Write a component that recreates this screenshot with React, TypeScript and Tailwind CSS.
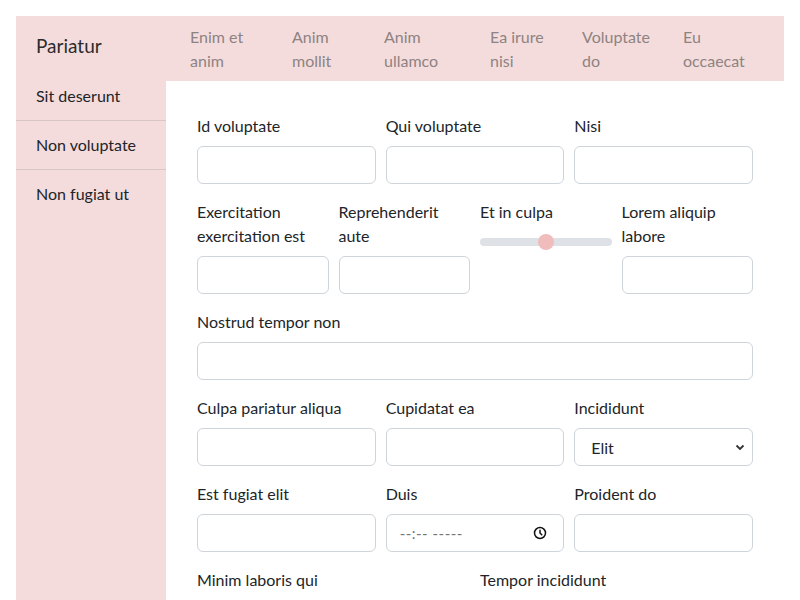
import React from "react";

const font = { fontFamily: "Lato, 'Liberation Sans', sans-serif" };

function Label({ children }: { children: React.ReactNode }) {
  return <div className="text-[16px] leading-6 text-[#212529] mb-2">{children}</div>;
}

function Input() {
  return <div className="h-[38px] rounded-[6px] border border-[#ced4da] bg-white" />;
}

function Field({ label }: { label: React.ReactNode }) {
  return (
    <div className="flex flex-col">
      <Label>{label}</Label>
      <Input />
    </div>
  );
}

export default function App() {
  const nav = [
    { a: "Enim et", b: "anim", w: "w-[102px]" },
    { a: "Anim", b: "mollit", w: "w-[92px]" },
    { a: "Anim", b: "ullamco", w: "w-[106px]" },
    { a: "Ea irure", b: "nisi", w: "w-[92px]" },
    { a: "Voluptate", b: "do", w: "w-[101px]" },
    { a: "Eu", b: "occaecat", w: "w-[80px]" },
  ];
  return (
    <div className="h-[600px] overflow-hidden bg-white pt-4 px-4" style={font}>
      <div className="flex flex-col">
        <header className="h-[65px] bg-[#f5dcdc] flex items-center">
          <div className="w-[150px] pl-5 mb-[6px] text-[19px] leading-[30px] text-[#2b2b2b]">Pariatur</div>
          <nav className="flex ml-6">
            {nav.map((n, i) => (
              <div key={i} className={`${n.w} text-[16px] leading-6 text-[#8d8383]`}>
                {n.a}
                <br />
                {n.b}
              </div>
            ))}
          </nav>
        </header>
        <div className="flex h-[600px]">
          <aside className="w-[150px] bg-[#f5dcdc] flex flex-col">
            <div className="px-5 pt-[3px] pb-3 leading-6 text-[16px] text-[#212529] border-b border-[#d9c6c6]">Sit deserunt</div>
            <div className="px-5 py-3 leading-6 text-[16px] text-[#212529] border-b border-[#d9c6c6]">Non voluptate</div>
            <div className="px-5 py-3 leading-6 text-[16px] text-[#212529]">Non fugiat ut</div>
          </aside>
          <main className="flex-1 bg-white px-[31px] pt-[33px] flex flex-col gap-4">
            <div className="grid grid-cols-3 gap-x-[10px]">
              <Field label="Id voluptate" />
              <Field label="Qui voluptate" />
              <Field label="Nisi" />
            </div>
            <div className="grid grid-cols-4 gap-x-[10px]">
              <Field label={<>Exercitation<br />exercitation est</>} />
              <Field label={<>Reprehenderit<br />aute</>} />
              <div className="flex flex-col">
                <div className="text-[16px] leading-6 text-[#212529]">Et in culpa</div>
                <div className="relative h-4 mt-[10px] flex items-center">
                  <div className="w-full h-[8px] rounded-full bg-[#dee2e6]" />
                  <div className="absolute left-[58px] top-0 w-4 h-4 rounded-full bg-[#f0bcbc]" />
                </div>
              </div>
              <Field label={<>Lorem aliquip<br />labore</>} />
            </div>
            <div className="flex flex-col">
              <Label>Nostrud tempor non</Label>
              <Input />
            </div>
            <div className="grid grid-cols-3 gap-x-[10px]">
              <Field label="Culpa pariatur aliqua" />
              <Field label="Cupidatat ea" />
              <div className="flex flex-col">
                <Label>Incididunt</Label>
                <div className="h-[38px] rounded-[6px] border border-[#ced4da] bg-white flex items-center justify-between pl-4 pr-[6px]">
                  <span className="text-[16px] text-[#212529] mt-[2px]">Elit</span>
                  <svg width="12" height="12" viewBox="0 0 12 12">
                    <path d="M2.5 4.5 L6 8 L9.5 4.5" fill="none" stroke="#333" strokeWidth="1.8" />
                  </svg>
                </div>
              </div>
            </div>
            <div className="grid grid-cols-3 gap-x-[10px]">
              <Field label="Est fugiat elit" />
              <div className="flex flex-col">
                <Label>Duis</Label>
                <div className="h-[38px] rounded-[6px] border border-[#ced4da] bg-white flex items-center justify-between pl-[13px] pr-[16px]">
                  <span className="text-[15px] text-[#757575] tracking-[0.5px]">--:-- -----</span>
                  <svg width="14" height="14" viewBox="0 0 14 14">
                    <circle cx="7" cy="7" r="5.5" fill="none" stroke="#111" strokeWidth="1.5" />
                    <path d="M7 3.8 V7 L9.2 9.2" fill="none" stroke="#111" strokeWidth="1.5" />
                  </svg>
                </div>
              </div>
              <Field label="Proident do" />
            </div>
            <div className="grid grid-cols-2 gap-x-[10px]">
              <Field label="Minim laboris qui" />
              <Field label="Tempor incididunt" />
            </div>
          </main>
        </div>
      </div>
    </div>
  );
}
